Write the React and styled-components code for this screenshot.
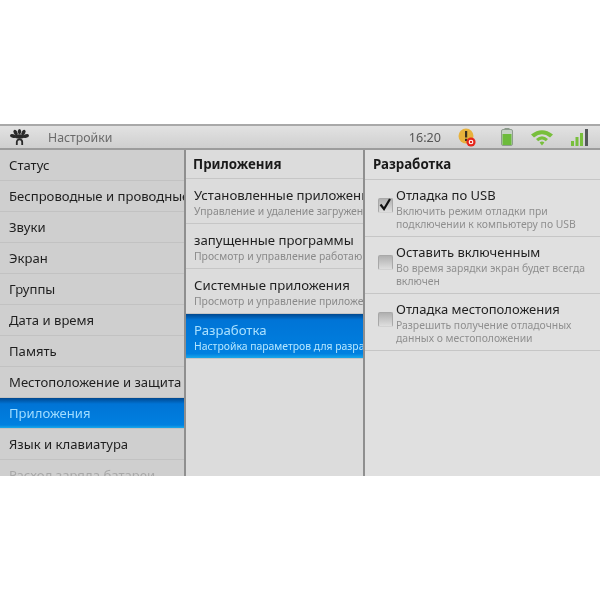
import styled, { createGlobalStyle } from 'styled-components';

const Global = createGlobalStyle`
  html, body { margin: 0; padding: 0; background: #fff; }
  body { font-family: "Noto Sans", "Open Sans", sans-serif; }
`;

const Page = styled.div`
  width: 600px;
  height: 600px;
  padding-top: 124px;
  box-sizing: border-box;
  background: #fff;
`;

const Screen = styled.div`
  width: 600px;
  height: 352px;
  display: flex;
  flex-direction: column;
  overflow: hidden;
  filter: blur(0.45px);
`;

const StatusBar = styled.div`
  height: 26px;
  flex: none;
  box-sizing: border-box;
  display: flex;
  align-items: center;
  padding-left: 10px;
  border-top: 2px solid #a9a9a9;
  border-bottom: 2px solid #9c9c9c;
  background: linear-gradient(#e2e2e2, #cfcfcf);
`;

const BarTitle = styled.span`
  margin-left: 19px;
  font-size: 12.3px;
  color: #6a6a6a;
`;

const BarRight = styled.div`
  margin-left: auto;
  display: flex;
  align-items: center;
`;

const Clock = styled.span`
  font-size: 12.6px;
  color: #555;
  margin-right: 17px;
`;

const BarIcon = styled.svg`
  display: block;
  margin-right: ${p => p.$gap}px;
`;

const Columns = styled.div`
  flex: 1;
  display: flex;
  min-height: 0;
`;

const LeftColumn = styled.div`
  width: 186px;
  flex: none;
  box-sizing: border-box;
  background: #cfcfcf;
  border-right: 2px solid #8f8f8f;
`;

const MiddleColumn = styled.div`
  width: 179px;
  flex: none;
  box-sizing: border-box;
  background: #dcdcdc;
  border-right: 2px solid #8f8f8f;
`;

const RightColumn = styled.div`
  flex: 1;
  background: #e0e0e0;
`;

const selected = 'linear-gradient(#00488f 0, #0074d6 6px, #0080e0 90%, #19a8ea 100%)';

const MenuItem = styled.div`
  height: 31px;
  box-sizing: border-box;
  padding: 0 0 1px 9px;
  display: flex;
  align-items: center;
  white-space: nowrap;
  overflow: hidden;
  font-size: 13.1px;
  color: ${p => (p.$active ? '#9fdcff' : p.$faded ? '#a8a8a8' : '#1f1f1f')};
  border-bottom: 1px solid #c2c2c2;
  background: ${p => (p.$active ? selected : 'transparent')};
`;

const PaneHeader = styled.div`
  height: ${p => p.$height}px;
  box-sizing: border-box;
  padding: 0 0 ${p => p.$height - 28}px ${p => p.$inset}px;
  display: flex;
  align-items: center;
  font-size: 13.3px;
  font-weight: 700;
  color: #1a1a1a;
  border-bottom: 1px solid #c6c6c6;
`;

const AppRow = styled.div`
  height: 45px;
  box-sizing: border-box;
  padding: 6px 0 0 8px;
  white-space: nowrap;
  overflow: hidden;
  border-bottom: 1px solid #c6c6c6;
  background: ${p => (p.$active ? selected : 'transparent')};
`;

const RowTitle = styled.div`
  font-size: 13.2px;
  line-height: 20px;
  color: ${p => (p.$active ? '#a8e0ff' : '#1f1f1f')};
`;

const RowSub = styled.div`
  font-size: 10.4px;
  line-height: 13px;
  color: ${p => (p.$active ? '#b5e6ff' : '#8a8a8a')};
`;

const DevRow = styled.div`
  height: 57px;
  box-sizing: border-box;
  display: flex;
  padding: 5px 0 0 13px;
  border-bottom: 1px solid #c6c6c6;
`;

const CheckBox = styled.div`
  width: 15px;
  height: 15px;
  box-sizing: border-box;
  flex: none;
  margin: 13px 3px 0 0;
  border-radius: 2px;
  border: 1px solid #a8a8a8;
  border-bottom-color: #d2d2d2;
  background: linear-gradient(#b0b0b0, #dedede);
  position: relative;
`;

const Tick = styled.svg`
  position: absolute;
  left: -1px;
  top: -2px;
`;

const DevTitle = styled.div`
  font-size: 13px;
  line-height: 20px;
  color: #1f1f1f;
`;

const DevSub = styled.div`
  font-size: 10.4px;
  line-height: 13px;
  color: #8f8f8f;
`;

const menu = ['Статус', 'Беспроводные и проводные сети', 'Звуки', 'Экран', 'Группы', 'Дата и время', 'Память', 'Местоположение и защита', 'Приложения', 'Язык и клавиатура', 'Расход заряда батареи'];

const apps = [
  ['Установленные приложения', 'Управление и удаление загруженных приложений'],
  ['запущенные программы', 'Просмотр и управление работающими программами'],
  ['Системные приложения', 'Просмотр и управление приложениями'],
  ['Разработка', 'Настройка параметров для разработки приложений'],
];

const dev = [
  ['Отладка по USB', 'Включить режим отладки при', 'подключении к компьютеру по USB', true],
  ['Оставить включенным', 'Во время зарядки экран будет всегда', 'включен', false],
  ['Отладка местоположения', 'Разрешить получение отладочных', 'данных о местоположении', false],
];

const Logo = () => (
  <svg width="19" height="17" viewBox="0 0 19 17">
    <g fill="#2a2a2a">
      <ellipse cx="3" cy="7" rx="3" ry="1.8" transform="rotate(15 3 7)" />
      <ellipse cx="5.5" cy="3.5" rx="1.8" ry="2.8" transform="rotate(-30 5.5 3.5)" />
      <ellipse cx="9.5" cy="2.6" rx="1.7" ry="2.6" />
      <ellipse cx="13.5" cy="3.5" rx="1.8" ry="2.8" transform="rotate(30 13.5 3.5)" />
      <ellipse cx="16" cy="7" rx="3" ry="1.8" transform="rotate(-15 16 7)" />
      <ellipse cx="9.5" cy="7.5" rx="5.5" ry="2.2" />
    </g>
    <path d="M6.8 16v-3a2.7 2.7 0 0 1 5.4 0v3" fill="none" stroke="#2a2a2a" strokeWidth="1.8" />
  </svg>
);

const AlertIcon = () => (
  <BarIcon $gap={25} width="18" height="19" viewBox="0 0 18 19">
    <circle cx="8" cy="8" r="7.5" fill="#e8b23c" />
    <rect x="7" y="3" width="2.2" height="6.5" fill="#3a3020" />
    <rect x="7" y="10.8" width="2.2" height="2.2" fill="#3a3020" />
    <circle cx="13" cy="14" r="4.6" fill="#e5261c" />
    <circle cx="13" cy="14" r="1.8" fill="none" stroke="#fff" strokeWidth="1.1" />
  </BarIcon>
);

const BatteryIcon = () => (
  <BarIcon $gap={18} width="12" height="18" viewBox="0 0 12 18">
    <rect x="3.5" y="0" width="5" height="2" fill="#8a9a8a" />
    <rect x="0.5" y="1.5" width="11" height="16" rx="1.5" fill="#c6d2c6" stroke="#8f9c8f" />
    <rect x="1.5" y="6" width="9" height="11" fill="#6dbb3c" />
  </BarIcon>
);

const WifiIcon = () => (
  <BarIcon $gap={18} width="22" height="17" viewBox="0 0 22 17">
    <path d="M0 5.5 Q11 -3 22 5.5 L19 8.5 Q11 2 3 8.5 Z" fill="#78bf3c" />
    <path d="M5 10 Q11 4.5 17 10 L14.8 12.2 Q11 9 7.2 12.2 Z" fill="#78bf3c" />
    <path d="M8.6 13.4 Q11 11.6 13.4 13.4 L11 16.5 Z" fill="#78bf3c" />
  </BarIcon>
);

const SignalIcon = () => (
  <BarIcon $gap={12} width="17" height="17" viewBox="0 0 17 17">
    <rect x="0" y="12" width="3" height="5" fill="#78bf3c" />
    <rect x="4.5" y="8" width="3" height="9" fill="#78bf3c" />
    <rect x="9" y="4" width="3" height="13" fill="#78bf3c" />
    <rect x="14" y="0" width="3" height="17" fill="#55585a" />
  </BarIcon>
);

const App = () => {
  return (
    <Page>
      <Global />
      <Screen>
        <StatusBar>
          <Logo />
          <BarTitle>Настройки</BarTitle>
          <BarRight>
            <Clock>16:20</Clock>
            <AlertIcon />
            <BatteryIcon />
            <WifiIcon />
            <SignalIcon />
          </BarRight>
        </StatusBar>
        <Columns>
          <LeftColumn>
            {menu.map((m, i) => (
              <MenuItem key={m} $active={i === 8} $faded={i === 10}>{m}</MenuItem>
            ))}
          </LeftColumn>
          <MiddleColumn>
            <PaneHeader $height={29} $inset={7}>Приложения</PaneHeader>
            {apps.map((a, i) => (
              <AppRow key={a[0]} $active={i === 3}>
                <RowTitle $active={i === 3}>{a[0]}</RowTitle>
                <RowSub $active={i === 3}>{a[1]}</RowSub>
              </AppRow>
            ))}
          </MiddleColumn>
          <RightColumn>
            <PaneHeader $height={30} $inset={8}>Разработка</PaneHeader>
            {dev.map(d => (
              <DevRow key={d[0]}>
                <CheckBox>
                  {d[3] && (
                    <Tick width="15" height="15" viewBox="0 0 15 15">
                      <path d="M2.5 7.5 L6 12 L12 2" fill="none" stroke="#111" strokeWidth="2.2" />
                    </Tick>
                  )}
                </CheckBox>
                <div>
                  <DevTitle>{d[0]}</DevTitle>
                  <DevSub>{d[1]}</DevSub>
                  <DevSub>{d[2]}</DevSub>
                </div>
              </DevRow>
            ))}
          </RightColumn>
        </Columns>
      </Screen>
    </Page>
  );
};

export default App;
